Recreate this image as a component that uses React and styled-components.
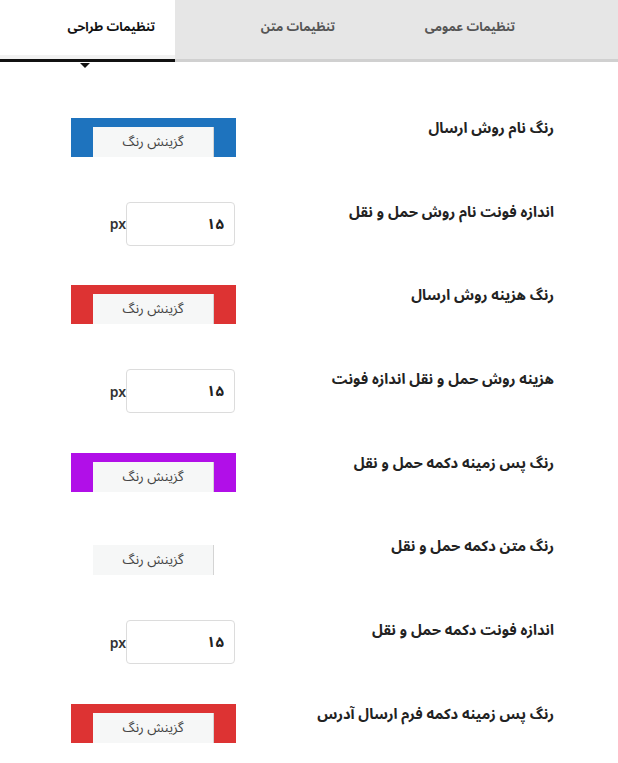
import React from "react";
import styled, { createGlobalStyle } from "styled-components";

const GlobalStyle = createGlobalStyle`
  html, body {
    margin: 0;
    padding: 0;
    background: #fff;
    font-family: "Noto Sans Arabic", "DejaVu Sans", sans-serif;
    overflow: hidden;
  }
`;

const tabs = [
  { title: "تنظیمات طراحی", active: true },
  { title: "تنظیمات متن" },
  { title: "تنظیمات عمومی" },
];

const fields = [
  { label: "رنگ نام روش ارسال", type: "color", color: "#1e73be" },
  { label: "اندازه فونت نام روش حمل و نقل", type: "size", value: "۱۵" },
  { label: "رنگ هزینه روش ارسال", type: "color", color: "#dd3333" },
  { label: "هزینه روش حمل و نقل اندازه فونت", type: "size", value: "۱۵" },
  { label: "رنگ پس زمینه دکمه حمل و نقل", type: "color", color: "#b10fe8" },
  { label: "رنگ متن دکمه حمل و نقل", type: "color", color: "transparent" },
  { label: "اندازه فونت دکمه حمل و نقل", type: "size", value: "۱۵" },
  { label: "رنگ پس زمینه دکمه فرم ارسال آدرس", type: "color", color: "#dd3333" },
];

const App = () => {
  return (
    <Page>
      <GlobalStyle />
      <TabBar>
        {tabs.map((tab, index) => (
          <Tab key={index} $active={tab.active}>
            {tab.title}
          </Tab>
        ))}
      </TabBar>
      <Form>
        {fields.map((field, index) => (
          <Row key={index}>
            <Label>{field.label}</Label>
            <Control>
              {field.type === "color" ? (
                <Swatch $color={field.color}>
                  <PickButton>گزینش رنگ</PickButton>
                </Swatch>
              ) : (
                <SizeField>
                  <SizeInput defaultValue={field.value} />
                  <Unit>px</Unit>
                </SizeField>
              )}
            </Control>
          </Row>
        ))}
      </Form>
    </Page>
  );
};

const Page = styled.div`
  width: 618px;
  height: 763px;
  overflow: hidden;
`;

const TabBar = styled.div`
  display: flex;
  height: 59px;
  background: #e6e6e6;
  border-bottom: 3px solid #d0d0d0;
  margin-left: -5px;
`;

const Tab = styled.div`
  position: relative;
  width: 180px;
  flex: none;
  box-sizing: border-box;
  padding-right: 20px;
  text-align: right;
  direction: rtl;
  line-height: 54px;
  font-size: 12.5px;
  font-weight: bold;
  color: ${p => (p.$active ? "#111" : "#555")};
  background: ${p => (p.$active ? "#fff" : "transparent")};
  height: ${p => (p.$active ? "62px" : "59px")};
  box-shadow: ${p => (p.$active ? "inset 0 -4px 0 #f2f2f2" : "none")};
  border-bottom: ${p => (p.$active ? "3px solid #111" : "none")};

  &::after {
    content: "";
    display: ${p => (p.$active ? "block" : "none")};
    position: absolute;
    left: 50%;
    bottom: -9px;
    margin-left: -5px;
    border-left: 5px solid transparent;
    border-right: 5px solid transparent;
    border-top: 5px solid #111;
  }
`;

const Form = styled.div`
  padding-top: 56px;
  padding-right: 64px;
`;

const Row = styled.div`
  direction: rtl;
  display: grid;
  grid-template-columns: 318px 165px;
  height: 83.7px;
`;

const Label = styled.div`
  font-size: 14.7px;
  font-weight: bold;
  color: #222;
  line-height: 22px;
`;

const Control = styled.div`
  display: flex;
  align-items: flex-start;
`;

const Swatch = styled.div`
  direction: ltr;
  width: 165px;
  height: 39px;
  box-sizing: border-box;
  padding: 9px 22px 0;
  background: ${p => p.$color};
`;

const PickButton = styled.div`
  height: 30px;
  box-sizing: border-box;
  background: #f6f7f7;
  border-right: 1px solid #d4d4d4;
  text-align: center;
  line-height: 30px;
  font-size: 13.5px;
  color: #444;
  direction: rtl;
`;

const SizeField = styled.div`
  display: flex;
  align-items: center;
  direction: rtl;
  margin-right: 1px;
`;

const SizeInput = styled.input`
  width: 109px;
  height: 44px;
  box-sizing: border-box;
  border: 1px solid #dcdcdc;
  border-radius: 4px;
  padding: 0 10px;
  font-family: "Noto Sans Arabic", "DejaVu Sans", sans-serif;
  font-size: 15px;
  font-weight: bold;
  color: #222;
  text-align: right;
  direction: rtl;
  outline: none;
`;

const Unit = styled.span`
  margin-left: 3px;
  font-family: "Noto Sans", "Liberation Sans", sans-serif;
  font-size: 14px;
  font-weight: 600;
  color: #333;
`;

export default App;
